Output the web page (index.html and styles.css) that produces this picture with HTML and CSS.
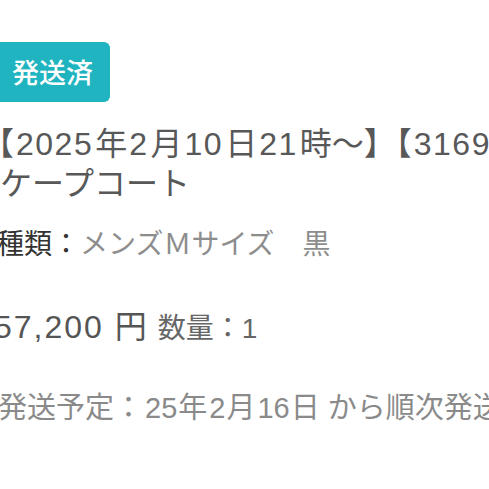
FILE: index.html
```html
<!DOCTYPE html>
<html lang="ja">
<head>
<meta charset="utf-8">
<title>注文詳細</title>
<link rel="stylesheet" href="styles.css">
</head>
<body>
<main class="order">
  <div class="badge">発送済</div>
  <h1 class="title">
    <span class="title-line first"><span class="lead-bracket">【</span><span class="num">2025</span>年<span class="num">2</span>月<span class="num">10</span>日<span class="num">21</span>時〜】【<span class="num">3169</span></span>
    <span class="title-line">ケープコート</span>
  </h1>
  <p class="variant"><span class="label">種類：</span><span class="value">メンズＭサイズ　黒</span></p>
  <p class="price"><span class="amount">57,200 円</span> <span class="qty">数量：1</span></p>
  <p class="ship">発送予定：<span class="num">25</span>年<span class="num">2</span>月<span class="num">16</span>日 から順次発送</p>
</main>
</body>
</html>
```

FILE: styles.css
```css
html, body {
  margin: 0;
  padding: 0;
  background: #ffffff;
}
body {
  width: 489px;
  height: 489px;
  overflow: hidden;
  font-family: "Liberation Sans", "Noto Sans CJK JP", sans-serif;
}
.order {
  display: flex;
  flex-direction: column;
  align-items: flex-start;
  padding-top: 42px;
  white-space: nowrap;
}
.badge {
  margin-left: -8px;
  width: 118px;
  height: 60px;
  box-sizing: border-box;
  padding-left: 20px;
  background: #1fb4bf;
  color: #ffffff;
  border-radius: 6px;
  font-family: "Noto Sans CJK JP", sans-serif;
  font-size: 27px;
  line-height: 60px;
  font-weight: 500;
}
.title {
  margin: 22px 0 0 0;
  font-size: 32px;
  line-height: 40px;
  font-weight: 400;
  color: #585858;
}
.title-line {
  display: block;
}
.lead-bracket {
  margin-left: -18px;
}
.num {
  margin: 0 1px 0 2px;
}
.title .num {
  margin: 0 2px;
  letter-spacing: 1.5px;
}
.variant {
  margin: 23px 0 0 -4px;
  font-size: 28px;
  line-height: 36px;
}
.label {
  color: #333333;
}
.value {
  color: #8d8d8d;
}
.price {
  margin: 46px 0 0 -6px;
  font-size: 32px;
  line-height: 36px;
  color: #555555;
}
.amount {
  letter-spacing: 2px;
}
.qty {
  font-size: 28px;
  color: #666666;
}
.ship {
  margin: 43px 0 0 -2px;
  font-size: 29px;
  line-height: 36px;
  color: #8a8a8a;
}
```
